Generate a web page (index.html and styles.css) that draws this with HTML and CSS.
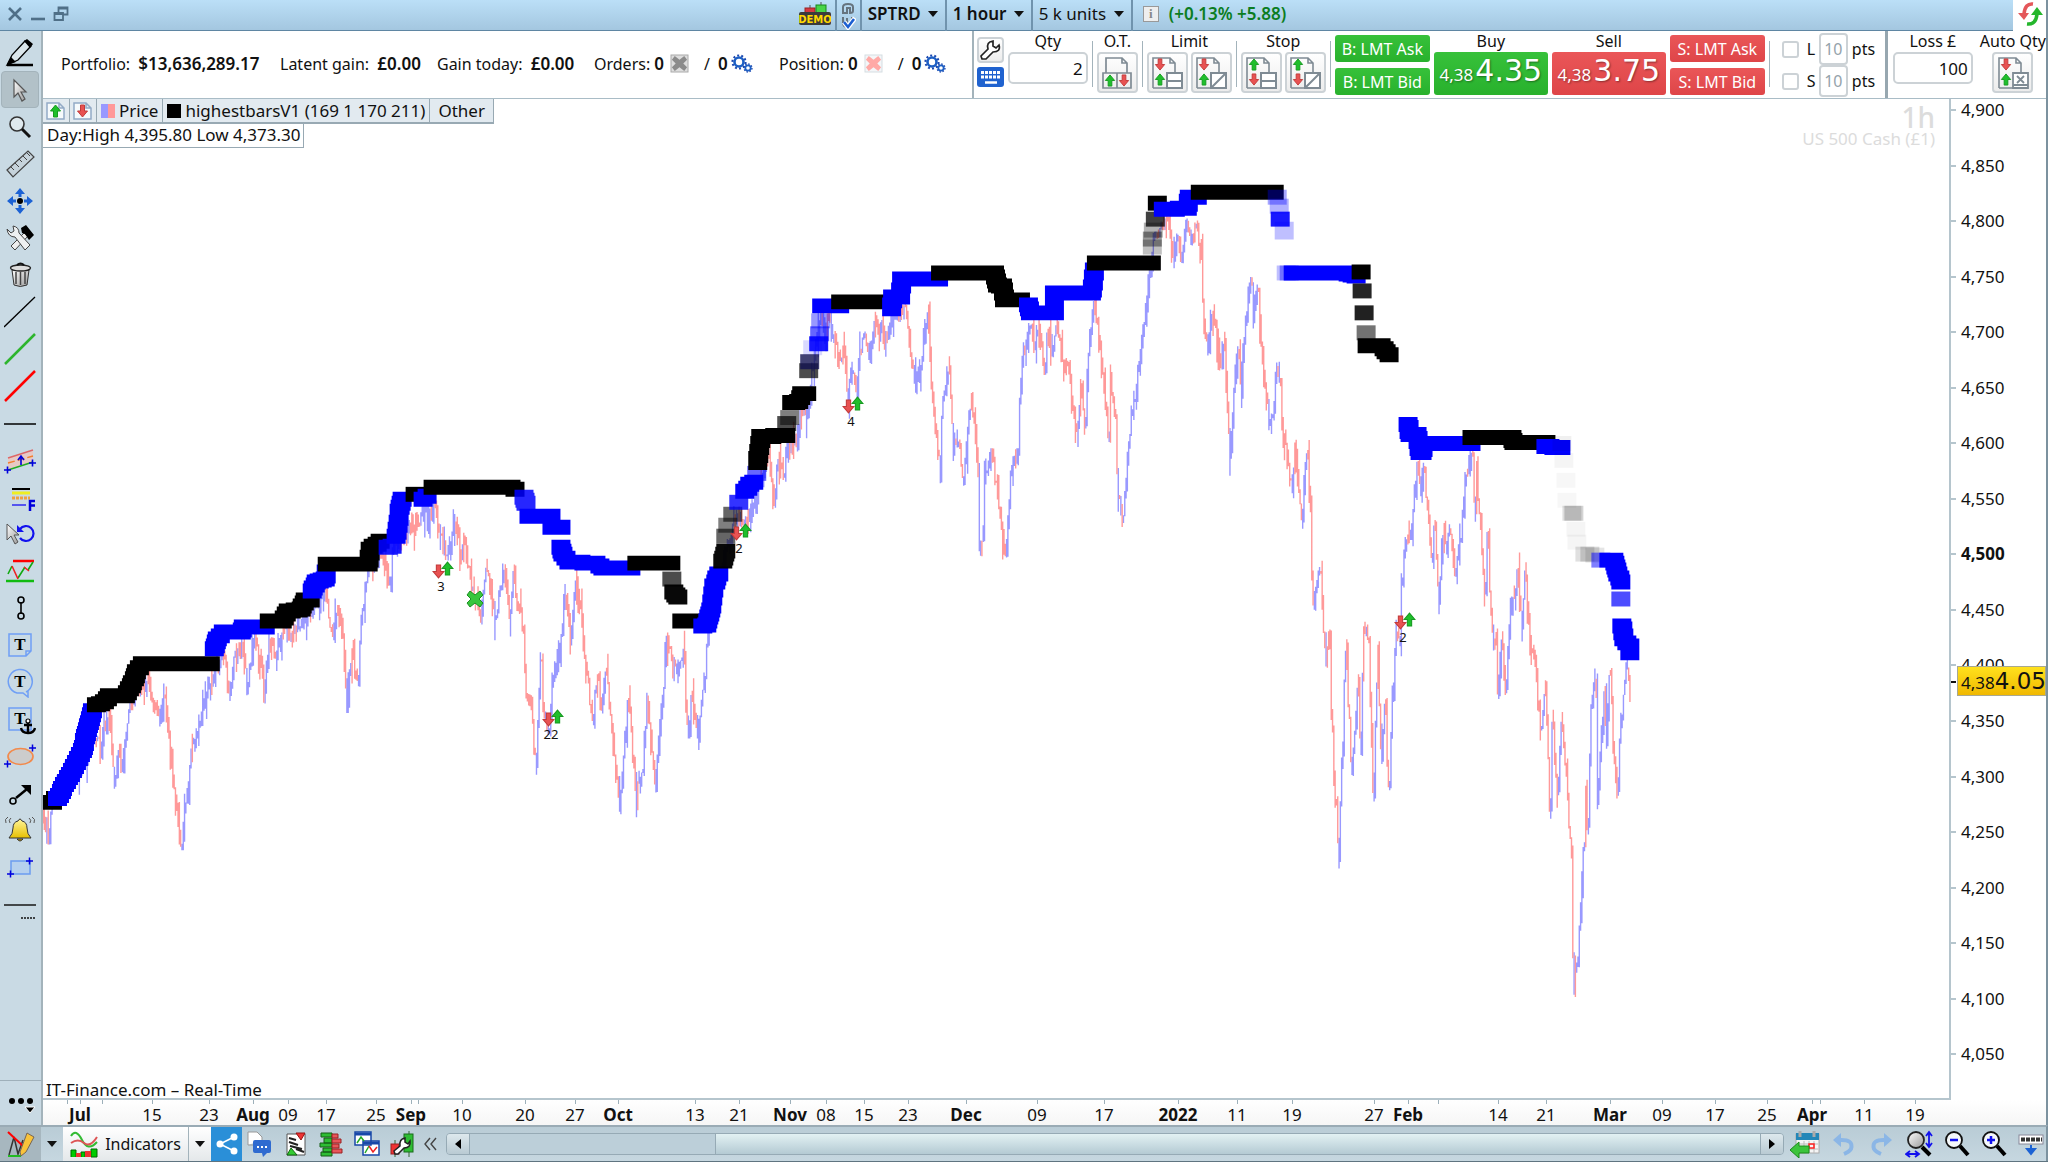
FILE: index.html
```html
<!DOCTYPE html>
<html lang="en">
<head>
<meta charset="utf-8">
<title>SPTRD 1 hour</title>
<link rel="stylesheet" href="styles.css">
</head>
<body>
<svg class="defs" aria-hidden="true">
  <defs>
    <linearGradient id="metal" x1="0" y1="0" x2="1" y2="1"><stop offset="0" stop-color="#fff"/><stop offset="1" stop-color="#999"/></linearGradient>
    <linearGradient id="gold" x1="0" y1="0" x2="0" y2="1"><stop offset="0" stop-color="#fff59a"/><stop offset="1" stop-color="#e8c000"/></linearGradient>
    <symbol id="up" viewBox="0 0 12 14"><path d="M6 1L11 7H8V13H4V7H1Z" fill="#1fbf2b" stroke="#169a20" stroke-width="1"/></symbol>
    <symbol id="down" viewBox="0 0 12 14"><path d="M6 13L11 7H8V1H4V7H1Z" fill="#e85252" stroke="#c23a3a" stroke-width="1"/></symbol>
    <symbol id="gears" viewBox="0 0 22 20">
      <circle cx="8" cy="8" r="4.500" fill="none" stroke="#1c5fc4" stroke-width="2.600"/>
      <circle cx="8" cy="8" r="6.600" fill="none" stroke="#1a48b0" stroke-width="2" stroke-dasharray="2 2.150"/>
      <circle cx="17" cy="14" r="2.700" fill="none" stroke="#1c5fc4" stroke-width="1.800"/>
      <circle cx="17" cy="14" r="4" fill="none" stroke="#1a48b0" stroke-width="1.300" stroke-dasharray="1.500 1.600"/>
    </symbol>
    <symbol id="cross" viewBox="0 0 20 20"><path d="M5 2L10 6L15 2L18 6L14 10L18 14L15 18L10 14L5 18L2 14L6 10L2 6Z"/></symbol>
    <symbol id="page" viewBox="0 0 30 32"><path d="M1 31V1H18L23 6V15M18 1V6H23M1 31H15" fill="none" stroke="#7f8b94" stroke-width="1.600"/></symbol>
  </defs>
</svg>

<header class="titlebar">
  <div class="window-buttons">
    <button aria-label="Close"><svg width="16" height="16" viewBox="0 0 16 16"><path d="M2 2L14 14M14 2L2 14" stroke="#4f6f87" stroke-width="2.600"/></svg></button>
    <button aria-label="Minimise"><svg width="16" height="16" viewBox="0 0 16 16"><path d="M1 13H15" stroke="#4f6f87" stroke-width="2.600"/></svg></button>
    <button aria-label="Restore"><svg width="16" height="16" viewBox="0 0 16 16"><path d="M1.500 7H10V14H1.500ZM5.500 7V1.500H14.500V8.500H10M1.500 8H10M5.500 2.500H14" fill="none" stroke="#4f6f87" stroke-width="1.800"/></svg></button>
  </div>
  <svg class="demo" width="32" height="26" viewBox="0 0 32 26"><path d="M11 4V10M22 1V10" stroke="#555"/><rect x="6" y="7" width="10" height="6" fill="#d43a42" stroke="#922"/><rect x="17" y="4" width="10" height="9" fill="#48d548" stroke="#17871b"/><rect x="0" y="11" width="32" height="13" rx="2" fill="#3b3b3b"/><text x="16" y="22" class="demo-text">DEMO</text></svg>
  <div class="tcell link-cell"><svg width="16" height="28" viewBox="0 0 16 28"><path d="M3 11V5Q3 2 8 2Q13 2 13 5V9Q13 11 10 11V6H7V11Z" fill="none" stroke="#66747f" stroke-width="2"/><path d="M3 15V21Q3 25 8 25M7 16V21M12 15V18" fill="none" stroke="#66747f" stroke-width="2"/><path d="M4 20L8 25L15 16" fill="none" stroke="#fff" stroke-width="5"/><path d="M4 20L8 25L14 17" fill="none" stroke="#1b5fd2" stroke-width="2.600"/></svg></div>
  <label class="tcell pick strong"><select aria-label="Instrument"><option>SPTRD</option></select></label>
  <label class="tcell pick strong"><select aria-label="Timeframe"><option>1 hour</option></select></label>
  <label class="tcell pick"><select aria-label="Units"><option>5 k units</option></select></label>
  <div class="tcell change"><span class="info">i</span><span>(+0.13% +5.88)</span></div>
  <button class="refresh" aria-label="Refresh"><svg width="26" height="26" viewBox="0 0 26 26"><path d="M16 3Q8 2 7 13" fill="none" stroke="#e4575a" stroke-width="3.500"/><path d="M1 12H12L7 19Z" fill="#e4575a"/><path d="M10 23Q19 24 20 13" fill="none" stroke="#24b62c" stroke-width="3.500"/><path d="M14 14H26L20 6Z" fill="#24b62c"/></svg></button>
</header>

<main class="workspace">
  <nav class="rail" aria-label="Drawing tools">
    <button aria-label="Draw"><svg viewBox="0 0 32 32"><path d="M3 28L8 18L21 4L27 9L14 23Z" fill="#dbe6eb" stroke="#000" stroke-width="1.300"/><path d="M20 4L23 2L29 7L26 11ZM3 28L7 20L12 25Z"/><path d="M3 28H29" stroke="#000" stroke-width="2.500"/></svg></button>
    <button class="on" aria-label="Pointer"><svg viewBox="0 0 32 32"><path d="M10 6V23L14 19L18 27L21 25L17 18H22Z" fill="url(#metal)" stroke="#555" stroke-width="1.200"/></svg></button>
    <button aria-label="Zoom"><svg viewBox="0 0 32 32"><circle cx="13" cy="13" r="7" fill="#dfe9ee" stroke="#333" stroke-width="1.600"/><path d="M18 18L26 26" stroke="#111" stroke-width="3"/></svg></button>
    <button aria-label="Ruler"><svg viewBox="0 0 32 32"><path d="M3 22L24 3L30 9L9 29Z" fill="#c6d3db" stroke="#444" stroke-width="1.200"/><path d="M7 19L10 22M11 15L15 19M15 11L18 14M19 8L23 12M23 5L26 8" stroke="#444"/></svg></button>
    <button aria-label="Move"><svg viewBox="0 0 32 32"><circle cx="16" cy="16" r="3" fill="#000"/><path d="M16 3L21 9H17.500V12H14.500V9H11ZM16 29L21 23H17.500V20H14.500V23H11ZM3 16L9 11V14.500H12V17.500H9V21ZM29 16L23 11V14.500H20V17.500H23V21Z" fill="#1c62d4"/></svg></button>
    <button aria-label="Settings"><svg viewBox="0 0 32 32"><path d="M7 24L20 11L24 14L11 28Z" fill="#eee" stroke="#444"/><path d="M17 6L22 3L30 13L25 18L21 12L18 11Z"/><path d="M3 7L7 11L10 9L9 4Q15 5 15 11L26 23L21 28L11 15Q4 15 3 7Z" fill="#eef0f1" stroke="#444"/></svg></button>
    <button aria-label="Delete"><svg viewBox="0 0 32 32"><path d="M8 11L10 26Q16 29 23 26L25 11Z" fill="url(#metal)" stroke="#333"/><path d="M12 13V25M16.500 13V26M21 13V25" stroke="#444" stroke-width="1.500"/><ellipse cx="16.500" cy="9" rx="10" ry="3" fill="#ddd" stroke="#222" stroke-width="1.300"/><path d="M13 6Q16.500 3 20 6" fill="none" stroke="#111" stroke-width="2"/></svg></button>
    <button aria-label="Line"><svg viewBox="0 0 32 32"><path d="M0 31L31 1" stroke="#000" stroke-width="1.300"/></svg></button>
    <button aria-label="Green line"><svg viewBox="0 0 32 32"><path d="M1 31L31 1" stroke="#2db52d" stroke-width="2.500"/></svg></button>
    <button aria-label="Red line"><svg viewBox="0 0 32 32"><path d="M1 31L31 1" stroke="#f00" stroke-width="2.500"/></svg></button>
    <button aria-label="Horizontal line"><svg viewBox="0 0 32 32"><path d="M0 17H32" stroke="#000" stroke-width="1.500"/></svg></button>
    <button aria-label="Channel"><svg viewBox="0 0 32 32"><path d="M4 14L29 7V18L4 25Z" fill="#e7c9c5"/><path d="M4 14L29 6" stroke="#d66" stroke-width="1.500"/><path d="M4 19L29 12" stroke="#f08030" stroke-width="1.500" stroke-dasharray="7 3"/><path d="M4 26L29 18" stroke="#2a2" stroke-width="1.500"/><path d="M0 26H7M3.500 22.500V29.500M25 19H32M28.500 15.500V22.500M17 21V13M14 16L17 12L20 16" fill="none" stroke="#00d" stroke-width="1.600"/></svg></button>
    <button aria-label="Fibonacci"><svg viewBox="0 0 32 32"><path d="M8 8H26" stroke="#000" stroke-width="2"/><path d="M8 12H26" stroke="#ee2" stroke-width="3"/><path d="M8 17H26" stroke="#f0a040" stroke-width="3" stroke-dasharray="3 1"/><path d="M8 24H22" stroke="#55e" stroke-width="2"/><path d="M26 30V20H31M26 24.500H31" fill="none" stroke="#00d" stroke-width="2.500"/></svg></button>
    <button aria-label="Revert"><svg viewBox="0 0 32 32"><path d="M3 6V22L7 18L11 26L14 24L10 17H15Z" fill="url(#metal)" stroke="#555"/><path d="M16 11A7.500 7.500 0 1 1 16 20" fill="none" stroke="#11e" stroke-width="2.200"/><path d="M13 7V14H20Z" fill="#11e"/></svg></button>
    <button aria-label="Zigzag"><svg viewBox="0 0 32 32"><path d="M9 6H30" stroke="#f00" stroke-width="2.500"/><path d="M2 26H30" stroke="#1b1" stroke-width="2.500"/><path d="M4 19L8 11M14 23L21 12M24 15L29 7" stroke="#1a1" stroke-width="1.600"/><path d="M8 11L14 24M20 12L25 16" stroke="#e22" stroke-width="1.600"/></svg></button>
    <button aria-label="Segment"><svg viewBox="0 0 32 32"><path d="M17 10V22" stroke="#000" stroke-width="1.600"/><circle cx="17" cy="8" r="3" fill="none" stroke="#000" stroke-width="1.600"/><circle cx="17" cy="24" r="3" fill="none" stroke="#000" stroke-width="1.600"/></svg></button>
    <button aria-label="Text note"><svg viewBox="0 0 32 32"><path d="M5 5H27V22L22 27H5ZM27 22H22V27" fill="none" stroke="#6f9ff5" stroke-width="1.500"/><text x="16" y="21" class="tee">T</text></svg></button>
    <button aria-label="Text balloon"><svg viewBox="0 0 32 32"><path d="M22 26A12 12 0 1 0 13 27L19 27L24 31V25" fill="none" stroke="#6f9ff5" stroke-width="1.500"/><text x="16" y="21" class="tee">T</text></svg></button>
    <button aria-label="Anchored text"><svg viewBox="0 0 32 32"><path d="M5 5H27V27H5Z" fill="none" stroke="#6f9ff5" stroke-width="1.500"/><text x="16" y="21" class="tee">T</text><path d="M24 19V29M20 22H28M17 25Q18 30 24 30Q30 30 31 25" fill="none" stroke="#000" stroke-width="2.400"/><circle cx="24" cy="18" r="2" fill="#fff" stroke="#000" stroke-width="1.200"/></svg></button>
    <button aria-label="Ellipse"><svg viewBox="0 0 32 32"><ellipse cx="16.500" cy="16.500" rx="12.500" ry="8" fill="#ccc" stroke="#f28a4c" stroke-width="1.700"/><path d="M0 24H7M3.500 20.500V27.500M25 8H32M28.500 4.500V11.500" stroke="#00d" stroke-width="1.500"/></svg></button>
    <button aria-label="Arrow"><svg viewBox="0 0 32 32"><circle cx="9" cy="24" r="3" fill="none" stroke="#000" stroke-width="1.600"/><path d="M12 21L23 12" stroke="#000" stroke-width="2.500"/><path d="M17 8H27V18Z"/></svg></button>
    <button aria-label="Alert"><svg viewBox="0 0 32 32"><path d="M5 24Q9 20 9 14Q9 8 14 7Q16 3 18 7Q23 8 23 14Q23 20 27 24Z" fill="url(#gold)" stroke="#333"/><path d="M13 25Q16 29 19 25Z" fill="#e0b000" stroke="#333"/><path d="M2 9Q0 5 4 3M6 9Q4 6 7 4M30 9Q32 5 28 3M26 9Q28 6 25 4" fill="none" stroke="#555"/></svg></button>
    <button aria-label="Rectangle"><svg viewBox="0 0 32 32"><rect x="7" y="10" width="19" height="13" fill="#b5d0ee" stroke="#6b9cf0" stroke-width="1.500"/><path d="M3 23H10M6.500 19.500V26.500M22 10H29M25.500 6.500V13.500" stroke="#00d" stroke-width="1.500"/></svg></button>
    <button aria-label="Line style"><svg viewBox="0 0 32 32"><path d="M0 17H32" stroke="#222" stroke-width="1.600"/><path d="M17 30H31" stroke="#111" stroke-width="1.500" stroke-dasharray="2 1"/></svg></button>
    <button class="more" aria-label="More tools"><svg viewBox="0 0 32 32"><circle cx="7" cy="14" r="3"/><circle cx="16" cy="14" r="3"/><circle cx="25" cy="14" r="3"/><path d="M20 20H30L25 26Z" stroke="#fff"/></svg></button>
  </nav>

  <section class="content">
    <div class="trading">
      <div class="summary">
        <span class="f-portfolio">Portfolio: <b>$13,636,289.17</b></span>
        <span class="f-latent">Latent gain: <b>£0.00</b></span>
        <span class="f-today">Gain today: <b>£0.00</b></span>
        <span class="pair f-orders">Orders: <b>0</b><svg class="xbox" width="20" height="19"><rect x="1" y="1" width="17" height="17" fill="#ddd" stroke="#aaa"/><use href="#cross" width="19" height="19" fill="#8b8b8b"/></svg><i>/</i><b>0</b><svg width="22" height="20"><use href="#gears"/></svg></span>
        <span class="pair">Position: <b>0</b><svg class="xbox" width="20" height="19"><rect x="1" y="1" width="17" height="17" fill="#f4f6f8" stroke="#d5dde2"/><use href="#cross" width="19" height="19" fill="#ffa9a6"/></svg><i>/</i><b>0</b><svg width="22" height="20"><use href="#gears"/></svg></span>
      </div>
      <div class="ticket">
        <div class="mini">
          <button class="soft wrench" aria-label="Ticket settings"><svg width="22" height="22" viewBox="0 0 22 22"><path d="M2 17L9 10Q7 3 14 2V7L17 9L20 6Q22 13 14 13L7 20H3Z" fill="#fff" stroke="#222" stroke-width="1.700"/></svg></button>
          <button class="keys" aria-label="Keyboard"><svg width="25" height="20" viewBox="0 0 25 20"><path d="M3 5.500H22M3 10H22" stroke="#fff" stroke-width="3" stroke-dasharray="3 1"/><path d="M7 15.500H19" stroke="#fff" stroke-width="2.500"/></svg></button>
        </div>
        <label class="col qty">Qty<input value="2"></label>
        <i class="sep"></i>
        <div class="col">O.T.<button class="soft big" aria-label="Order type"><svg width="34" height="34" viewBox="0 0 34 34"><path d="M6 17V2H22L27 7V17M22 2V7H27M3 17H31V32H3ZM17 17V32" fill="none" stroke="#7f8b94" stroke-width="1.700"/><use href="#up" x="4" y="18" width="12" height="13"/><use href="#down" x="18" y="18" width="12" height="13"/></svg></button></div>
        <i class="sep"></i>
        <div class="col">Limit<div class="two">
          <button class="soft big" aria-label="Limit"><svg width="34" height="34" viewBox="0 0 34 34"><use href="#page" x="2" y="1" width="30" height="32"/><use href="#down" x="4" y="2" width="12" height="13"/><use href="#up" x="4" y="17" width="12" height="13"/><path d="M17 17H32V32H17ZM17 25H32" fill="#fff" stroke="#7f8b94" stroke-width="2"/></svg></button>
          <button class="soft big" aria-label="Limit slope"><svg width="34" height="34" viewBox="0 0 34 34"><use href="#page" x="2" y="1" width="30" height="32"/><use href="#down" x="4" y="2" width="12" height="13"/><use href="#up" x="4" y="17" width="12" height="13"/><path d="M17 17H32V32H17ZM17 32L32 17" fill="#fff" stroke="#7f8b94" stroke-width="2"/></svg></button></div></div>
        <i class="sep"></i>
        <div class="col">Stop<div class="two">
          <button class="soft big" aria-label="Stop"><svg width="34" height="34" viewBox="0 0 34 34"><use href="#page" x="2" y="1" width="30" height="32"/><use href="#up" x="4" y="2" width="12" height="13"/><use href="#down" x="4" y="17" width="12" height="13"/><path d="M17 17H32V32H17ZM17 25H32" fill="#fff" stroke="#7f8b94" stroke-width="2"/></svg></button>
          <button class="soft big" aria-label="Stop slope"><svg width="34" height="34" viewBox="0 0 34 34"><use href="#page" x="2" y="1" width="30" height="32"/><use href="#up" x="4" y="2" width="12" height="13"/><use href="#down" x="4" y="17" width="12" height="13"/><path d="M17 17H32V32H17ZM17 32L32 17" fill="#fff" stroke="#7f8b94" stroke-width="2"/></svg></button></div></div>
        <i class="sep"></i>
        <div class="stack"><button class="buy">B: LMT Ask</button><button class="buy">B: LMT Bid</button></div>
        <div class="col">Buy<button class="price buy"><small>4,38</small>4.35</button></div>
        <div class="col">Sell<button class="price sell"><small>4,38</small>3.75</button></div>
        <div class="stack"><button class="sell">S: LMT Ask</button><button class="sell">S: LMT Bid</button></div>
        <i class="sep"></i>
        <div class="points">
          <div><input type="checkbox" id="lim"><label for="lim">L</label><input class="pts" value="10" aria-label="Limit points" disabled>pts</div>
          <div><input type="checkbox" id="stp"><label for="stp">S</label><input class="pts" value="10" aria-label="Stop points" disabled>pts</div>
        </div>
        <div class="risk">
          <label class="col qty loss">Loss £<input value="100"></label>
          <div class="col">Auto Qty<button class="soft big" aria-label="Auto quantity"><svg width="34" height="34" viewBox="0 0 34 34"><use href="#page" x="2" y="1" width="30" height="32"/><use href="#down" x="4" y="2" width="12" height="13"/><use href="#up" x="4" y="17" width="12" height="13"/><path d="M17 17H32V32H17ZM17 29H32M21 20L28 27M28 20L21 27" fill="#fff" stroke="#7f8b94" stroke-width="1.800"/></svg></button></div>
        </div>
      </div>
    </div>

    <div class="chart">
      <div class="plot" id="plot">
        <div class="legend">
          <button aria-label="Up"><svg width="20" height="18"><path d="M1 1H13L18 6V17H1ZM13 1V6H18" fill="#f6fafc" stroke="#93aac6" stroke-width="1.500"/><use href="#up" x="3" y="2" width="13" height="14"/></svg></button>
          <button aria-label="Down"><svg width="20" height="18"><path d="M1 1H13L18 6V17H1ZM13 1V6H18" fill="#f6fafc" stroke="#93aac6" stroke-width="1.500"/><use href="#down" x="3" y="2" width="13" height="14"/></svg></button>
          <button><span class="chip price-chip"></span>Price</button>
          <button><span class="chip black-chip"></span>highestbarsV1 (169 1 170 211)</button>
          <button class="other">Other</button>
        </div>
        <div class="day">Day:High 4,395.80 Low 4,373.30</div>
        <div class="watermark"><b>1h</b>US 500 Cash (£1)</div>
        <div class="source">IT-Finance.com – Real-Time</div>
      </div>
      <div class="yaxis" id="yaxis"></div>
      <div class="xaxis" id="xaxis"></div>
    </div>
  </section>
</main>

<footer class="bottombar">
  <button class="draw" aria-label="Drawings"><svg width="28" height="28" viewBox="0 0 28 28"><path d="M2 25L7 7L11 24L16 10" fill="none" stroke="#333" stroke-width="1.500"/><path d="M1 2L16 16" stroke="#f00" stroke-width="2"/><path d="M1 26H14" stroke="#2b2" stroke-width="2"/><path d="M13 22L20 3L27 7L19 22L14 26Z" fill="#f9c33a" stroke="#765"/></svg></button>
  <button class="caret-cell" aria-label="Drawing menu"><i class="caret"></i></button>
  <button class="indicators"><svg width="28" height="28" viewBox="0 0 28 28"><path d="M1 6Q6 -2 12 10T27 12" fill="none" stroke="#3b3" stroke-width="2"/><path d="M1 13Q8 8 14 13T27 7" fill="none" stroke="#d55" stroke-width="2"/><path d="M1 27V20H6V27M11 27V22H15V27M21 27V19H27V27Z" fill="#0c0" stroke="#060"/><path d="M6 27V23H11V27M15 27V21H21V27" fill="#e33"/></svg>Indicators</button>
  <button class="caret-cell white" aria-label="Indicator menu"><i class="caret"></i></button>
  <button class="share" aria-label="Share"><svg width="22" height="22" viewBox="0 0 22 22"><path d="M18 4L4 11L18 18" fill="none" stroke="#fff" stroke-width="1.600"/><g fill="#fff"><circle cx="18" cy="4" r="3.500"/><circle cx="4" cy="11" r="3.500"/><circle cx="18" cy="18" r="3.500"/></g></svg></button>
  <div class="icons">
    <button aria-label="Comments"><svg width="26" height="26" viewBox="0 0 26 26"><path d="M2 14V1H11L16 6V9M2 14H7" fill="#fff" stroke="#999"/><path d="M9 9H23Q25 9 25 11V20Q25 22 23 22H21L17 26L16 22H9Q7 22 7 20V11Q7 9 9 9Z" fill="#2f6bd0"/><path d="M11 16H22" stroke="#fff" stroke-width="2" stroke-dasharray="2 2"/></svg></button>
    <button aria-label="Report"><svg width="26" height="26" viewBox="0 0 26 26"><path d="M5 3H23V24H5Z" fill="#fff" stroke="#555"/><path d="M7 7L14 9M7 11L16 14M8 15L20 18M14 18L22 21" stroke="#222" stroke-width="2"/><path d="M14 2H23L19 9Z" fill="#e33" stroke="#911"/><path d="M5 24L9 17L15 24Z" fill="#3c3" stroke="#161"/></svg></button>
    <button aria-label="Order book"><svg width="26" height="26" viewBox="0 0 26 26"><path d="M3 2H14V6H3ZM6 7H14V12H6ZM2 12H14V16H2ZM5 17H14V21H5ZM3 21H14V25H3Z" fill="#2ebd33" stroke="#145c16"/><path d="M14 3H20V7H14ZM14 8H23V12H14ZM14 13H21V17H14ZM14 18H24V22H14Z" fill="#e8555a" stroke="#922"/></svg></button>
    <button aria-label="Windows"><svg width="26" height="26" viewBox="0 0 26 26"><path d="M1 1H17V14H1ZM9 10H25V24H9Z" fill="#fff" stroke="#1848a8" stroke-width="1.500"/><path d="M1 3H17M9 12H25" stroke="#1848a8" stroke-width="3"/><path d="M3 12L7 6L10 10M11 22L15 15" fill="none" stroke="#2a2" stroke-width="1.500"/><path d="M15 15L19 21L23 16" fill="none" stroke="#e22" stroke-width="1.500"/></svg></button>
    <button aria-label="Automated trading"><svg width="26" height="26" viewBox="0 0 26 26"><path d="M5 9V26M19 0V26" stroke="#363"/><rect x="1" y="13" width="8" height="10" fill="#e33" stroke="#922"/><rect x="14" y="3" width="9" height="18" fill="#2ebd33" stroke="#186b1b"/><path d="M4 20L10 15Q9 8 15 7V11L18 13L20 10Q21 17 14 17L8 23H5Z" fill="#fff" stroke="#222" stroke-width="1.500"/></svg></button>
  </div>
  <button class="collapse" aria-label="Collapse"><svg width="14" height="14" viewBox="0 0 14 14"><path d="M6 1L1 7L6 13M12 1L7 7L12 13" fill="none" stroke="#444" stroke-width="1.400"/></svg></button>
  <div class="scroll"><button class="sbtn" aria-label="Scroll left"><i class="left"></i></button><div class="gutter"></div><div class="thumb"></div><button class="sbtn" aria-label="Scroll right"><i class="right"></i></button></div>
  <div class="icons end">
    <button aria-label="Go to date"><svg width="30" height="28" viewBox="0 0 30 28"><rect x="6" y="4" width="23" height="19" fill="#f5f5f5" stroke="#aaa"/><path d="M6 3H29V10H6Z" fill="#2387b8"/><path d="M10 1V7M24 1V7" stroke="#aaa" stroke-width="3"/><path d="M8 14H28M8 19H28M14 11V23M19 11V23M24 11V23" stroke="#bbb"/><rect x="19" y="14" width="5" height="4" fill="none" stroke="#f22" stroke-width="1.500"/><path d="M0 20L9 12V16H19V23H9V28Z" fill="#3cc43c" stroke="#1a8a1a"/></svg></button>
    <button aria-label="Undo"><svg width="26" height="24" viewBox="0 0 26 24"><path d="M8 8Q23 7 20 17Q18 20 13 22" fill="none" stroke="#8bb6e6" stroke-width="4"/><path d="M2 8L10 1V15Z" fill="#8bb6e6"/></svg></button>
    <button aria-label="Redo"><svg width="26" height="24" viewBox="0 0 26 24"><path d="M18 8Q3 7 6 17Q8 20 13 22" fill="none" stroke="#8bb6e6" stroke-width="4"/><path d="M24 8L16 1V15Z" fill="#8bb6e6"/></svg></button>
    <button aria-label="Fit"><svg width="28" height="28" viewBox="0 0 28 28"><circle cx="11" cy="10" r="8" fill="url(#metal)" stroke="#222" stroke-width="1.800"/><path d="M17 17L25 25" stroke="#000" stroke-width="4"/><path d="M24 3V16M21 6L24 2L27 6M21 13L24 17L27 13M2 24H13M5 21L1 24L5 27M10 21L14 24L10 27" fill="none" stroke="#11e" stroke-width="1.800"/></svg></button>
    <button aria-label="Zoom out"><svg width="26" height="28" viewBox="0 0 26 28"><circle cx="10" cy="10" r="8" fill="#f5f8fa" stroke="#111" stroke-width="1.800"/><path d="M16 16L24 25" stroke="#000" stroke-width="4"/><path d="M6 10H14" stroke="#11e" stroke-width="2.500"/></svg></button>
    <button aria-label="Zoom in"><svg width="26" height="28" viewBox="0 0 26 28"><circle cx="10" cy="10" r="8" fill="#f5f8fa" stroke="#111" stroke-width="1.800"/><path d="M16 16L24 25" stroke="#000" stroke-width="4"/><path d="M6 10H14M10 6V14" stroke="#11e" stroke-width="2.500"/></svg></button>
    <button aria-label="Dock"><svg width="26" height="26" viewBox="0 0 26 26"><rect x="1" y="4" width="24" height="9" fill="#fff" stroke="#889"/><path d="M3 8.500H24" stroke="#333" stroke-width="4" stroke-dasharray="4 1"/><path d="M13 14V20M9 18H17L13 23Z" fill="#1c62d4" stroke="#1c62d4" stroke-width="2"/></svg></button>
  </div>
</footer>
<script src="script.js"></script>
</body>
</html>
```
FILE: styles.css
```css
* { box-sizing: border-box; }
body {
  margin: 0;
  height: 100vh;
  display: flex;
  flex-direction: column;
  overflow: hidden;
  background: #fff;
  color: #111;
  font: 17px/20px "Noto Sans", sans-serif;
  border-bottom: 1px solid #5f7480;
}
button, input, select { font: inherit; color: inherit; margin: 0; }
button { padding: 0; border: 0; background: none; display: flex; align-items: center; justify-content: center; }
svg { display: block; flex: none; }
i { font-style: normal; }
.defs { position: absolute; width: 0; height: 0; }

/* title bar */
.titlebar {
  flex: 0 0 31px;
  display: flex;
  align-items: stretch;
  background: linear-gradient(#bbdff7, #a3c6df);
  box-shadow: inset 0 -1px #5f86a3;
}
.window-buttons { flex: 0 0 39%; display: flex; gap: 7px; padding: 0 0 4px 7px; align-items: center; }
.demo { margin: 1px 4px 0 0; }
.demo-text { font: bold 10px "DejaVu Sans", sans-serif; fill: #ffd800; text-anchor: middle; }
.tcell { display: flex; align-items: center; border-left: 2px solid #7093ad; padding: 0 6px 4px; }
.link-cell { padding: 0; width: 25px; justify-content: center; }
.pick select { appearance: none; border: 0; background: none; padding: 0; }
.pick::after, .caret { content: ""; border: 5px solid transparent; border-top: 6px solid #111; border-bottom: 0; }
.pick::after { margin-left: 7px; }
.pick { padding-right: 7px; padding-left: 6px; }
.strong select { font-weight: 600; }
.change { gap: 10px; padding-left: 10px; color: #0b7d22; font-weight: 600; }
.info { width: 16px; height: 16px; background: #eee; border: 1px solid #999; color: #888; font: bold 13px/14px "Liberation Serif", serif; text-align: center; }
.refresh { margin-left: auto; width: 35px; background: #fff; border-right: 2px solid #7c929f; padding-bottom: 4px; }

/* body */
.workspace { flex: 1; display: flex; min-height: 0; }
.rail {
  flex: 0 0 43px;
  display: flex;
  flex-direction: column;
  background: #c9dae4;
  border-right: 2px solid #a3b3bb;
  padding-top: 3px;
}
.rail button { height: 37px; width: 38px; margin-left: 1px; border-radius: 4px; }
.rail svg { width: 32px; height: 32px; }
.rail .on { background: #b2c1c8; border: 1px solid #a3b3bb; }
.rail .more { margin: auto 0 0; width: 41px; height: 45px; border-radius: 0; border-top: 1px solid #9fb0ba; }
.tee { font: bold 17px "Liberation Serif", serif; text-anchor: middle; }
.content { flex: 1; min-width: 0; display: flex; flex-direction: column; border-right: 2px solid #7c929f; }

/* trading bar */
.trading { flex: 0 0 68px; display: flex; justify-content: space-between; border-bottom: 1px solid #a9bcc6; font-size: 16px; white-space: nowrap; }
.summary { display: flex; align-items: center; padding: 0 0 2px 18px; }
.summary b { font-size: 17px; font-weight: 600; margin-left: 4px; }
.f-portfolio { width: 219px; }
.f-latent, .f-today { width: 157px; }
.f-orders { width: 185px; }
.pair { display: flex; align-items: center; }
.pair .xbox { margin: 0 14px 0 6px; }
.pair i { width: 10px; }
.pair b + svg:last-child { margin-left: 3px; }
.ticket { display: flex; border-left: 2px solid #a3b3bb; }
.mini { width: 34px; padding: 6px 3px 0; display: flex; flex-direction: column; gap: 4px; }
.soft { background: linear-gradient(#fff, #ececec); border: 2px solid #ccd2d6; border-radius: 4px; }
.wrench { width: 27px; height: 26px; }
.keys { width: 27px; height: 20px; background: #1f62cf; border-radius: 3px; }
.col { display: flex; flex-direction: column; align-items: center; gap: 1px; }
.two { display: flex; gap: 3px; }
.big { width: 41px; height: 41px; }
.qty input { width: 80px; height: 32px; border: 2px solid #ccd2d6; border-radius: 5px; text-align: right; padding: 0 3px; font-size: 17px; }
.sep { width: 1px; height: 46px; margin: 10px 4px 0; background: #a3b3bb; }
.stack { display: flex; flex-direction: column; gap: 6px; padding-top: 4px; }
.stack button { width: 95px; height: 27px; border-radius: 3px; }
.stack + .col, .col + .stack { margin-left: 4px; }
.col + .col { margin-left: 4px; }
.buy { background: linear-gradient(#37c13a, #28b12d); color: #fff; }
.sell { background: linear-gradient(#ea5658, #de4548); color: #fff; }
.price { width: 114px; height: 43px; border-radius: 3px; font: 30px/38px "DejaVu Sans", sans-serif; text-shadow: 1px 1px 2px #0006; align-items: baseline; }
.price small { font: 17px "Noto Sans", sans-serif; margin-right: 2px; }
.points { width: 111px; padding: 2px 0 0 8px; }
.points div { display: flex; align-items: center; height: 32px; }
.points label { width: 20px; padding-left: 8px; }
.points input[type=checkbox] { appearance: none; width: 17px; height: 17px; border: 2px solid #ccd2d6; border-radius: 3px; }
.pts { width: 29px; height: 32px; border: 2px solid #ccd2d6; border-radius: 4px; background: #fff; color: #95a3ab; padding: 0; text-align: center; margin-right: 4px; }
.risk { display: flex; border-left: 3px solid #97a7b0; padding-left: 5px; }
.risk .col + .col { margin-left: 7px; }

/* chart */
.chart { flex: 1; min-height: 0; display: grid; grid-template-columns: 1fr 95px; grid-template-rows: 1fr 25px; }
.plot { position: relative; border-right: 2px solid #b5c5cd; border-bottom: 2px solid #b5c5cd; }
.series { position: absolute; inset: 0; width: 100%; height: 100%; }
.legend { position: relative; display: flex; height: 25px; }
.legend button { background: #e2eaf0; border-right: 1px solid #98a9b3; border-bottom: 2px solid #98a9b3; padding: 0 4px; }
.legend button:nth-child(-n+2) { padding: 0 3px; }
.legend .other { padding: 0 8px; }
.chip { width: 14px; height: 14px; margin-right: 4px; }
.price-chip { background: linear-gradient(90deg, #99f 50%, #f99 50%); }
.black-chip { background: #000; }
.day { position: relative; width: fit-content; height: 24px; padding: 0 2px 0 4px; border: 1px solid #98a9b3; border-top: 0; border-left: 0; background: #fff; line-height: 22px; }
.watermark { position: absolute; right: 14px; top: 2px; text-align: right; color: #dcdcdc; line-height: 24px; }
.watermark b { display: block; font-weight: 500; font-size: 28px; line-height: 32px; margin-bottom: -6px; }
.source { position: absolute; left: 3px; bottom: 0; line-height: 16px; }
.mark { position: absolute; transform: translate(-50%, -50%); }
.mark text { font: 13px "Noto Sans", sans-serif; text-anchor: middle; fill: #111; }
.yaxis, .xaxis { position: relative; }
.xaxis { grid-column: 1 / 3; background: linear-gradient(#fff, #f6f6f6); }
.ytick { position: absolute; left: 0; display: flex; align-items: center; gap: 5px; transform: translateY(-50%); }
.ytick::before { content: ""; width: 5px; height: 2px; background: #b5c5cd; }
.strong-tick { font-weight: 700; }
.tag { position: absolute; left: 6px; width: 89px; height: 30px; transform: translateY(-50%); display: flex; align-items: baseline; padding-left: 3px; background: linear-gradient(#ffe11d, #f0b800); border: 1px solid #a8a890; white-space: nowrap; font: 23px/28px "DejaVu Sans", sans-serif; }
.tag small { font: 17px "Noto Sans", sans-serif; }
.tag::before { content: ""; position: absolute; left: -7px; top: 14px; width: 5px; height: 2px; background: #111; }
.xtick { position: absolute; top: 5px; transform: translateX(-50%); }
.xline { position: absolute; top: 0; width: 1px; height: 4px; background: #9db0ba; }

/* bottom bar */
.bottombar { flex: 0 0 36px; display: flex; align-items: stretch; background: linear-gradient(#b9ccd6, #c6d7e0); border-top: 2px solid #9aabb5; border-right: 2px solid #7c929f; }
.draw { width: 41px; background: #a7b7bf; }
.caret-cell { width: 22px; }
.white, .indicators { background: linear-gradient(#fff, #e4e8ea); }
.indicators { width: 126px; gap: 7px; font-size: 16px; border-right: 1px solid #a3b3bb; }
.share { width: 31px; background: #2a8fd8; }
.icons { display: flex; align-items: center; gap: 10px; padding-left: 4px; }
.collapse { width: 30px; }
.scroll { flex: 1; display: flex; height: 22px; margin-top: 6px; border: 1px solid #96aab5; border-radius: 4px; overflow: hidden; }
.sbtn { width: 22px; background: linear-gradient(#dde8ed, #b9cad3); }
.left { border: 5px solid transparent; border-right: 6px solid #000; border-left: 0; }
.right { border: 5px solid transparent; border-left: 6px solid #000; border-right: 0; }
.gutter { flex: 19; background: #bccfd9; border-left: 1px solid #96aab5; }
.thumb { flex: 81; background: linear-gradient(#e2f1f3, #b4cad3); border: solid #96aab5; border-width: 0 1px; }
.end { gap: 11px; padding: 0 2px 0 6px; }
```
FILE: script.js
```js
const X0 = 43, Y0 = 99, W = 1908, H = 1002;
const NS = 'http://www.w3.org/2000/svg';
const plot = document.getElementById('plot');
const pct = (v, t) => (v / t * 100).toFixed(3) + '%';

// price swing points
const path = '43 822 45 828 49 840 52 810 60 780 73 778 85 765 92 735 98 740 100 757 104 730 109 713 114 787 119 747 122 773 129 703 136 693 147 680 160 723 164 697 169 733 174 790 181 848 187 803 192 740 196 740 203 707 212 677 219 670 223 653 229 690 236 657 242 647 247 687 255 640 265 693 269 640 276 662 283 630 294 633 308 617 326 593 333 640 338 607 343 637 347 713 352 650 358 687 361 627 370 567 381 560 390 587 395 543 408 527 419 527 425 510 433 520 435 503 440 537 447 557 456 523 462 560 464 537 473 590 482 610 487 573 495 620 505 573 510 613 514 577 524 633 527 700 531 707 536 767 541 663 544 720 550 733 553 680 560 650 566 597 571 637 577 580 582 617 587 673 593 723 598 680 602 707 607 670 614 757 620 807 624 760 629 700 637 797 643 773 648 703 656 790 663 700 668 637 674 667 678 673 684 653 689 740 692 700 698 740 705 680 708 633 718 590 730 540 739 520 749 523 756 500 762 480 770 463 775 495 780 453 784 478 789 447 797 443 802 410 807 417 813 370 819 330 822 317 825 337 828 317 834 337 839 357 845 350 848 400 852 373 857 387 861 350 865 337 871 357 876 320 886 343 893 320 906 307 909 337 914 377 921 370 929 313 933 397 939 457 941 483 943 400 950 367 954 450 960 450 964 483 972 397 979 470 980 547 984 533 985 480 993 453 997 483 1002 523 1007 557 1012 470 1018 453 1023 357 1027 350 1031 327 1036 350 1039 330 1046 367 1049 330 1053 357 1057 323 1062 350 1069 370 1074 410 1078 430 1081 393 1086 427 1089 357 1095 300 1101 350 1105 383 1109 433 1111 377 1116 420 1119 497 1124 517 1130 437 1137 390 1143 337 1149 293 1156 233 1163 230 1169 220 1174 260 1180 237 1182 263 1187 227 1193 237 1198 227 1202 250 1205 321 1209 353 1214 312 1221 362 1225 339 1231 458 1235 390 1239 353 1242 390 1247 316 1252 284 1254 312 1259 289 1263 353 1270 422 1274 417 1278 367 1282 380 1283 431 1288 458 1293 491 1296 445 1303 523 1308 454 1311 504 1313 573 1315 610 1321 573 1327 665 1330 647 1333 734 1337 803 1340 858 1343 757 1347 647 1350 720 1353 775 1359 688 1362 757 1365 628 1369 642 1375 798 1379 656 1383 757 1386 716 1390 789 1394 688 1398 633 1401 647 1403 582 1407 541 1412 541 1416 495 1419 463 1422 491 1425 468 1430 518 1433 555 1436 523 1440 605 1445 527 1448 555 1451 536 1457 578 1462 541 1467 477 1473 454 1476 509 1477 463 1482 527 1486 587 1489 536 1493 628 1497 647 1500 697 1503 647 1507 688 1512 610 1517 596 1519 573 1523 624 1527 578 1531 637 1537 674 1542 729 1547 688 1551 807 1554 725 1559 794 1563 729 1567 775 1572 849 1575 985 1579 960 1582 917 1585 849 1587 789 1589 826 1593 702 1597 688 1599 807 1603 734 1606 702 1607 748 1611 674 1613 702 1616 771 1619 789 1623 720 1628 670 1631 688'.split(' ').map(Number);

let seed = 7;
const rnd = () => (seed = (seed * 16807) % 2147483647) / 2147483647;
const runs = { '#9999ff': '', '#ff9999': '' };
let k = 0, last = path[1];
for (let x = path[0]; x < 1632; x += 1.3) {
  let y = null;
  while (k < path.length - 4 && path[k + 2] < x) { k += 2; y = path[k + 1]; }
  const t = Math.min(1, (x - path[k]) / (path[k + 2] - path[k]));
  const trend = path[k + 3] - path[k + 1];
  if (y === null) y = path[k + 1] + trend * t + (rnd() - 0.5) * 16;
  const top = Math.min(last, y) - rnd() * rnd() * 22, bottom = Math.max(last, y) + rnd() * rnd() * 24;
  const colour = (trend + (rnd() - 0.5) * 60) < 0 ? '#9999ff' : '#ff9999';
  runs[colour] += `M${x.toFixed(1)} ${top.toFixed(1)}V${bottom.toFixed(1)}`;
  last = y;
}
let body = Object.entries(runs).map(([c, d]) => `<path d="${d}" stroke="${c}" stroke-width="1.4"/>`).join('');

// indicator squares: colour, opacity, centre points
const K = '#000', B = '#00f';
const bands = [
  [K, 1, 52, 804, 55, 800], [B, 1, 57, 800, 66, 783, 74, 768, 82, 752, 86, 735, 92, 712],
  [K, 1, 96, 706, 104, 703, 109, 697, 125, 697, 131, 687, 136, 673, 142, 665, 210, 665],
  [B, 1, 214, 650, 217, 640, 223, 633, 241, 633, 243, 628, 265, 628],
  [K, 1, 269, 622, 282, 622, 288, 612, 301, 610, 305, 601, 310, 601],
  [B, 1, 312, 592, 316, 583, 325, 580, 326, 573], [K, 1, 327, 565, 368, 565, 370, 550, 380, 542],
  [B, .9, 388, 548, 392, 547], [B, 1, 396, 537, 398, 526, 399, 512, 402, 500], [K, 1, 415, 495],
  [B, 1, 423, 500, 427, 497], [K, 1, 433, 488, 511, 488, 515, 490], [B, .85, 524, 498, 526, 504],
  [B, 1, 529, 517, 551, 517], [B, 1, 552, 528, 561, 528], [B, 1, 561, 548, 563, 555, 569, 563, 596, 564, 603, 569, 631, 569],
  [K, 1, 637, 564, 671, 564], [K, .7, 672, 580], [K, .97, 674, 593, 678, 598], [K, 1, 682, 622, 692, 622],
  [B, 1, 703, 627, 707, 626, 712, 607, 714, 587, 719, 575], [K, .97, 723, 562, 726, 552], [K, .6, 726, 537], [K, .5, 728, 526], [K, .6, 733, 515],
  [B, .8, 739, 503], [B, 1, 745, 492, 750, 485, 754, 483], [B, .6, 757, 474], [K, 1, 758, 463, 761, 437, 786, 436],
  [K, .7, 787, 424], [K, .5, 790, 418], [K, 1, 792, 403, 799, 402, 802, 394, 807, 394], [K, .7, 809, 371], [B, .15, 813, 348], ['#111150', .8, 810, 362],
  [B, .9, 819, 344], [B, .6, 820, 334], [B, .4, 821, 321], [B, 1, 822, 306, 840, 306], [K, 1, 841, 302, 876, 302],
  [B, 1, 892, 309, 893, 297, 901, 297, 902, 279, 939, 279], [K, 1, 941, 273, 995, 273, 998, 285, 1003, 286, 1005, 300, 1021, 300],
  [B, 1, 1029, 305, 1031, 313, 1055, 313, 1055, 293, 1092, 293, 1094, 280, 1095, 270], [K, 1, 1097, 263, 1152, 263],
  [K, .25, 1153, 247], [K, .4, 1153, 239], [K, .3, 1154, 230], [K, .75, 1156, 219], [K, 1, 1158, 203],
  [B, 1, 1164, 209, 1188, 208, 1190, 197, 1198, 197], [K, 1, 1201, 192, 1275, 192], [B, .35, 1278, 197], [B, .3, 1280, 206], [B, .9, 1281, 219], [B, .25, 1285, 229, 1285, 232],
  [B, .25, 1287, 273], [B, .4, 1290, 273], [B, 1, 1294, 273, 1345, 273, 1357, 276], [K, 1, 1362, 272], [K, .85, 1363, 291], [K, .87, 1365, 313], [K, .55, 1367, 333],
  [K, 1, 1368, 346, 1382, 346, 1387, 352, 1390, 355], [B, 1, 1409, 425, 1411, 435, 1418, 435, 1421, 453, 1423, 453, 1425, 444, 1472, 444],
  [K, 1, 1473, 438, 1513, 438, 1515, 443, 1547, 443], [B, 1, 1547, 447, 1562, 448], [K, .06, 1563, 444], [K, .04, 1565, 461], [K, .03, 1567, 481], [K, .03, 1568, 501],
  [K, .13, 1573, 514], [K, .17, 1575, 514], [K, .04, 1577, 530], [K, .04, 1578, 543], [K, .12, 1586, 555], [K, .14, 1591, 555], [K, .1, 1596, 556],
  [B, .5, 1602, 561], [B, 1, 1610, 561, 1615, 561, 1618, 571, 1622, 583], [B, .7, 1622, 600], [B, 1, 1623, 627, 1625, 640, 1631, 647, 1631, 654]
];
for (const [colour, opacity, ...p] of bands) {
  let d = '';
  const stamp = (x, y) => { d += `M${Math.round(x) - 9} ${Math.round(y) - 7}h19v15h-19z`; };
  stamp(p[0], p[1]);
  for (let i = 2; i < p.length; i += 2) {
    const dx = p[i] - p[i - 2], dy = p[i + 1] - p[i - 1];
    const n = Math.ceil(Math.max(Math.abs(dx), Math.abs(dy)) / 4);
    for (let j = 1; j <= n; j++) stamp(p[i - 2] + dx * j / n, p[i - 1] + dy * j / n);
  }
  body += `<path d="${d}" fill="${colour}" opacity="${opacity}"/>`;
}
plot.insertAdjacentHTML('afterbegin', `<svg xmlns="${NS}" class="series" viewBox="${X0} ${Y0} ${W} ${H}" preserveAspectRatio="none">${body}</svg>`);

// executed orders
for (const [x, y, n] of [[444, 570, '3'], [555, 719, '22'], [743, 532, '2'], [855, 405, '4'], [1407, 622, '2']]) {
  plot.insertAdjacentHTML('beforeend', `<svg class="mark" width="24" height="40" style="left:${pct(x - X0, W)};top:${pct(y - Y0 + 9, H)}"><use href="#down" x="0" y="6" width="13" height="15"/><use href="#up" x="9" y="3" width="13" height="15"/><text x="9" y="33">${n}</text></svg>`);
}
plot.insertAdjacentHTML('beforeend', `<svg class="mark" width="20" height="20" style="left:${pct(475 - X0, W)};top:${pct(601 - Y0, H)}"><use href="#cross" fill="#38c63c" stroke="#1d8f24"/></svg>`);

// axes
const yaxis = document.getElementById('yaxis');
for (let i = 0; i < 18; i++) {
  const v = 4900 - i * 50;
  yaxis.insertAdjacentHTML('beforeend', `<div class="ytick${v === 4500 ? ' strong-tick' : ''}" style="top:${pct(11 + i * 55.6, H)}">${v.toLocaleString('en-US')}</div>`);
}
yaxis.insertAdjacentHTML('beforeend', `<div class="tag" style="top:${pct(682 - Y0, H)}"><small>4,38</small>4.05</div>`);

const xaxis = document.getElementById('xaxis');
const days = 'Jul 80,15 152,23 209,Aug 253,09 288,17 326,25 376,Sep 411,10 462,20 525,27 575,Oct 618,13 695,21 739,Nov 790,08 826,15 864,23 908,Dec 966,09 1037,17 1104,2022 1178,11 1237,19 1292,27 1374,Feb 1408,14 1498,21 1546,Mar 1610,09 1662,17 1715,25 1767,Apr 1812,11 1864,19 1915'.split(',');
for (const d of days) {
  const [label, x] = d.split(' ');
  const left = pct(x - X0, 2003);
  xaxis.insertAdjacentHTML('beforeend', `<i class="xline" style="left:${left}"></i><div class="xtick${label.length > 2 ? ' strong-tick' : ''}" style="left:${left}">${label}</div>`);
}
for (const x of [67, 102, 418, 1438, 1820]) xaxis.insertAdjacentHTML('beforeend', `<i class="xline" style="left:${pct(x - X0, 2003)}"></i>`);
```
